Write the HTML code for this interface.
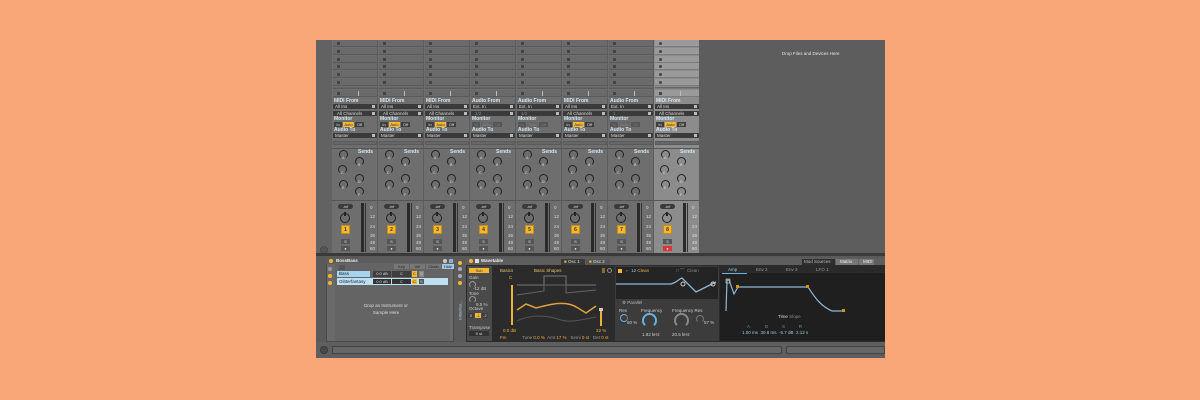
<!DOCTYPE html>
<html><head><meta charset="utf-8">
<style>
*{margin:0;padding:0;box-sizing:border-box}
body{width:1200px;height:400px;background:#f9a679;position:relative;overflow:hidden;font-family:"Liberation Sans",sans-serif;font-size:5px;color:#ddd}
#win{position:absolute;left:316px;top:40px;width:569px;height:318px;background:#5c5c5c;overflow:hidden}
.a{position:absolute}
.trk{position:absolute;top:0;width:45px;height:213px;background:#6e6e6e}
.trk.sel{background:#8c8c8c}
.clip{position:absolute;left:1px;width:44px;height:7px;background:#6a6a6a;border-bottom:1px solid #5a5a5a}
.sel .clip{background:#9a9a9a;border-bottom-color:#7a7a7a}
.sq{position:absolute;left:4px;top:2px;width:3px;height:3px;background:#444}
.lbl{position:absolute;left:2px;font-size:5px;font-weight:bold;color:#d6e6f0;line-height:6px}
.dd{position:absolute;left:1px;width:44px;height:5px;background:#3a3a3a;color:#ddd;font-size:4.5px;line-height:5px;padding-left:2px}
.dd:after{content:"";position:absolute;right:2px;top:1px;width:3px;height:3px;background:#bbb}
.btn{position:absolute;height:5px;font-size:4px;line-height:5px;text-align:center;background:#3e3e3e;color:#ddd}
.knob{position:absolute;width:9px;height:9px;border:1.3px solid #222;border-radius:50%;border-bottom-color:transparent}
.kl{position:absolute;font-size:3.5px;color:#ddd}
.num{position:absolute;left:9px;top:185px;width:9px;height:9px;background:#f5b730;color:#333;font-size:5px;font-weight:bold;text-align:center;line-height:9px;border:1px solid #c98e10}
.txt{position:absolute;font-size:4.5px;color:#ccc;white-space:nowrap}
.y{color:#f0b040}
</style></head><body>
<div id="win">
  <div class="a" style="left:0;top:0;width:16px;height:213px;background:#626262"></div>
  <div class="a" style="left:4px;top:206px;width:8px;height:8px;border-radius:50%;background:#555;border:1px solid #4a4a4a"></div>
  <div id="tracks"></div>
  <div class="a" style="left:385px;top:0;width:184px;height:213px;background:#5d5d5d"></div>
  <div class="txt" style="left:466px;top:11px;font-size:4.5px;color:#e6e6e6">Drop Files and Devices Here</div>
  <div class="a" style="left:0;top:213px;width:569px;height:3px;background:#3a3a3a"></div>
  <div class="a" style="left:0;top:216px;width:569px;height:102px;background:#5a5a5a"></div>

  <div class="a" style="left:10px;top:218px;width:128px;height:84px;background:#6a6a6a;border:1px solid #4a4a4a"></div>
  <div class="a" style="left:10px;top:218px;width:128px;height:6px;background:#5c5c5c"></div>
  <div class="a" style="left:13px;top:219px;width:4px;height:4px;border-radius:50%;background:#f5b730"></div>
  <div class="txt" style="left:20px;top:218px;color:#eee;font-weight:bold">BossBass</div>
  <div class="a" style="left:127px;top:219px;width:4px;height:4px;border-radius:50%;background:#ccc"></div>
  <div class="a" style="left:133px;top:219px;width:4px;height:4px;background:#9ac"></div>
  <div class="a" style="left:12px;top:227px;width:4px;height:4px;border-radius:50%;background:#999"></div>
  <div class="a" style="left:12px;top:234px;width:4px;height:4px;border-radius:50%;background:#f5b730"></div>
  <div class="a" style="left:12px;top:241px;width:4px;height:4px;border-radius:50%;background:#f5b730"></div>
  <div class="a" style="left:19px;top:223px;width:115px;height:78px;background:#646464"></div>
  <div class="btn" style="left:23px;top:225px;width:6px;background:#555"></div>
  <div class="btn" style="left:78px;top:224px;width:15px;background:#777;color:#222">Key</div>
  <div class="btn" style="left:94px;top:224px;width:15px;background:#777;color:#222">Vel</div>
  <div class="btn" style="left:110px;top:224px;width:15px;background:#777;color:#222">Chain</div>
  <div class="btn" style="left:126px;top:224px;width:12px;background:#9ccbe8;color:#222">Hide</div>
  <div class="a" style="left:21px;top:231px;width:33px;height:6px;background:#a4d4f0;color:#123;font-size:4.5px;padding-left:2px;line-height:6px">Bass</div>
  <div class="btn" style="left:57px;top:231px;width:18px;height:6px">0.0 dB</div>
  <div class="btn" style="left:76px;top:231px;width:19px;height:6px">C</div>
  <div class="btn" style="left:96px;top:231px;width:5px;height:6px;background:#f5b730;color:#333">C</div>
  <div class="btn" style="left:103px;top:231px;width:5px;height:6px;background:#888">S</div>
  <div class="a" style="left:21px;top:238px;width:111px;height:7px;background:#bfe0f2"></div>
  <div class="a" style="left:22px;top:239px;width:33px;height:5px;color:#123;font-size:4.5px;padding-left:1px;line-height:5px">Glitterfantasy</div>
  <div class="btn" style="left:57px;top:239px;width:18px;background:#333">0.0 dB</div>
  <div class="btn" style="left:76px;top:239px;width:19px;background:#333">C</div>
  <div class="btn" style="left:96px;top:239px;width:5px;background:#f5b730;color:#333">C</div>
  <div class="btn" style="left:103px;top:239px;width:5px;background:#555">S</div>
  <div class="txt" style="left:40px;top:262px;color:#ddd;text-align:center;width:60px;white-space:normal;line-height:7px">Drop an Instrument or Sample Here</div>

  <div class="a" style="left:140px;top:218px;width:9px;height:84px;background:#5a5a5a"></div>
  <div class="a" style="left:142px;top:221px;width:4px;height:4px;border-radius:50%;background:#f5b730"></div>
  <div class="a" style="left:142px;top:227px;width:4px;height:4px;border-radius:50%;background:#aaa"></div>
  <div class="a" style="left:142px;top:234px;width:4px;height:4px;border-radius:50%;background:#aaa"></div>
  <div class="a" style="left:142px;top:241px;width:4px;height:4px;border-radius:50%;background:#f5b730"></div>
  <div class="txt" style="left:134px;top:268px;transform:rotate(-90deg);font-size:4px;color:#bcd">Glitterfan...</div>

  <div class="a" style="left:150px;top:218px;width:419px;height:84px;background:#2b2b2b"></div>
  <div class="a" style="left:150px;top:218px;width:419px;height:7px;background:#5e5e5e"></div>
  <div class="a" style="left:153px;top:219px;width:4px;height:4px;border-radius:50%;background:#f5b730"></div>
  <div class="a" style="left:159px;top:219px;width:4px;height:4px;background:#ddd"></div>
  <div class="txt" style="left:165px;top:218px;color:#eee;font-weight:bold">Wavetable</div>
  <div class="a" style="left:245px;top:219px;width:24px;height:6px;background:#3a3a3a"></div>
  <div class="txt" style="left:248px;top:219px;color:#ddd"><span class="y">■</span> Osc 1</div>
  <div class="a" style="left:270px;top:219px;width:24px;height:6px;background:#555"></div>
  <div class="txt" style="left:273px;top:219px;color:#ddd"><span class="y">■</span> Osc 2</div>
  <div class="a" style="left:486px;top:219px;width:33px;height:6px;background:#2e2e2e"></div>
  <div class="txt" style="left:488px;top:219px;color:#bbb">Mod Sources</div>
  <div class="a" style="left:520px;top:219px;width:22px;height:6px;background:#777"></div>
  <div class="txt" style="left:524px;top:219px;color:#eee">Matrix</div>
  <div class="a" style="left:543px;top:219px;width:15px;height:6px;background:#777"></div>
  <div class="txt" style="left:547px;top:219px;color:#eee">MIDI</div>

  <div class="a" style="left:151px;top:226px;width:25px;height:75px;background:#4a4a4a"></div>
  <div class="a" style="left:153px;top:228px;width:20px;height:5px;background:#f5b730;color:#333;font-size:4px;text-align:center;line-height:5px">Sub</div>
  <div class="txt" style="left:153px;top:235px">Gain</div>
  <div class="knob" style="left:153px;top:241px;width:7px;height:7px;border-color:#999;border-bottom-color:transparent"></div>
  <div class="txt" style="left:157px;top:246px">-12 dB</div>
  <div class="txt" style="left:153px;top:251px">Tone</div>
  <div class="knob" style="left:153px;top:256px;width:7px;height:7px;border-color:#999;border-bottom-color:transparent"></div>
  <div class="txt" style="left:160px;top:262px">9.5 %</div>
  <div class="txt" style="left:153px;top:266px">Octave</div>
  <div class="btn" style="left:152px;top:273px;width:6px">0</div>
  <div class="btn" style="left:159px;top:273px;width:6px;background:#f5b730;color:#333">-1</div>
  <div class="btn" style="left:166px;top:273px;width:6px">-2</div>
  <div class="txt" style="left:153px;top:285px">Transpose</div>
  <div class="btn" style="left:153px;top:291px;width:20px;background:#333">0 st</div>

  <div class="txt" style="left:184px;top:228px;color:#f0c070">Basics</div>
  <div class="txt" style="left:218px;top:228px;color:#f0c070">Basic Shapes</div>
  <div class="a" style="left:286px;top:228px;width:3px;height:5px;background:#8a6a30"></div>
  <div class="a" style="left:291px;top:228px;width:5px;height:5px;border-radius:50%;border:1px solid #888"></div>
  <div class="a" style="left:195px;top:245px;width:2px;height:40px;background:#f0b040"></div>
  <div class="txt" style="left:193px;top:235px;color:#f0b040">C</div>
  <div class="txt" style="left:187px;top:288px;color:#f0b040">0.0 dB</div>
  <div class="a" style="left:284px;top:268px;width:2px;height:18px;background:#f0b040"></div>
  <div class="a" style="left:283px;top:268px;width:4px;height:3px;background:#ccc"></div>
  <div class="txt" style="left:280px;top:288px;color:#f0b040">32 %</div>
  <svg class="a" style="left:200px;top:232px" width="82" height="52" viewBox="0 0 82 52">
    <path d="M1 13 L28 13 L28 4 L50 4 L50 13 L80 13" fill="none" stroke="#777" stroke-width="1"/>
    <path d="M1 23 L28 19 L28 13 L50 13 L50 21 L80 18" fill="none" stroke="#666" stroke-width="1"/>
    <path d="M1 38 L10 32 L20 36 C35 32 50 28 62 36 L70 41 L80 34" fill="none" stroke="#e0a040" stroke-width="1.5"/>
    <path d="M1 49 C15 42 30 43 45 48 C55 51 70 47 80 45" fill="none" stroke="#555" stroke-width="1"/>
  </svg>
  <div class="txt" style="left:184px;top:295px;color:#f0b040">Fm</div>
  <div class="txt" style="left:206px;top:295px;color:#999">Tune <span class="y">0.0 %</span>&nbsp; Amt <span class="y">17 %</span>&nbsp;&nbsp; Semi <span class="y">0 st</span>&nbsp;&nbsp; Det <span class="y">0 st</span></div>

  <div class="a" style="left:299px;top:226px;width:104px;height:75px;background:#3c3c3c"></div>
  <div class="a" style="left:300px;top:227px;width:102px;height:32px;background:#242424"></div>
  <div class="a" style="left:302px;top:229px;width:4px;height:4px;background:#f5b730"></div>
  <div class="txt" style="left:310px;top:228px;color:#f0b040">⌐ &nbsp;<span style="color:#9cf">12</span> Clean</div>
  <div class="txt" style="left:360px;top:228px;color:#888">□ ⌒ &nbsp;Clean</div>
  <svg class="a" style="left:300px;top:236px" width="103" height="24"><path d="M0 8 L55 8 C62 6 64 2 66 2 L80 16 L100 6" fill="none" stroke="#8fb8d8" stroke-width="1.3"/><circle cx="67" cy="8" r="2" fill="none" stroke="#ccc"/><circle cx="97" cy="8" r="2" fill="none" stroke="#ccc"/></svg>
  <div class="txt" style="left:306px;top:260px;color:#bbb">⚙ Parallel</div>
  <div class="txt" style="left:303px;top:268px">Res</div>
  <div class="knob" style="left:304px;top:274px;width:8px;height:8px;border-color:#6ab0e0;border-right-color:#777"></div>
  <div class="txt" style="left:311px;top:280px">60 %</div>
  <div class="txt" style="left:325px;top:268px">Frequency</div>
  <div class="knob" style="left:326px;top:273px;width:15px;height:15px;border-width:2px;border-color:#6ab0e0;border-bottom-color:transparent"></div>
  <div class="txt" style="left:326px;top:292px">1.82 kHz</div>
  <div class="txt" style="left:356px;top:268px">Frequency Res</div>
  <div class="knob" style="left:358px;top:273px;width:15px;height:15px;border-width:2px;border-color:#888;border-bottom-color:transparent"></div>
  <div class="txt" style="left:356px;top:292px">20.5 kHz</div>
  <div class="knob" style="left:380px;top:275px;width:8px;height:8px;border-color:#777;border-bottom-color:transparent"></div>
  <div class="txt" style="left:388px;top:280px">57 %</div>

  <div class="a" style="left:404px;top:226px;width:165px;height:75px;background:#1f1f1f"></div>
  <div class="a" style="left:404px;top:226px;width:165px;height:7px;background:#2a2a2a"></div>
  <div class="txt" style="left:412px;top:227px;color:#9cd">Amp</div>
  <div class="a" style="left:406px;top:233px;width:25px;height:1px;background:#6ab0e0"></div>
  <div class="txt" style="left:440px;top:227px;color:#999">Env 2</div>
  <div class="txt" style="left:470px;top:227px;color:#999">Env 3</div>
  <div class="txt" style="left:500px;top:227px;color:#999">LFO 1</div>
  <svg class="a" style="left:404px;top:234px" width="165" height="40"><path d="M6 37 L7 6 L9 6 L14 20 L18 13 L88 13 C94 22 100 32 112 37 L125 37" fill="none" stroke="#8fb8d8" stroke-width="1.2"/><rect x="6" y="5" width="4" height="4" fill="none" stroke="#ccc" stroke-width=".6"/><rect x="16" y="11" width="3" height="3" fill="#c90"/><rect x="86" y="11" width="3" height="3" fill="#c90"/><rect x="122" y="35" width="3" height="3" fill="#c90"/></svg>
  <div class="txt" style="left:462px;top:274px;color:#ddd">Time <span style="color:#888">Slope</span></div>
  <div class="txt" style="left:431px;top:284px;color:#888">A&nbsp;&nbsp;&nbsp;&nbsp;&nbsp;&nbsp;&nbsp;&nbsp;&nbsp;&nbsp;&nbsp;&nbsp;D&nbsp;&nbsp;&nbsp;&nbsp;&nbsp;&nbsp;&nbsp;&nbsp;&nbsp;&nbsp;&nbsp;S&nbsp;&nbsp;&nbsp;&nbsp;&nbsp;&nbsp;&nbsp;&nbsp;&nbsp;&nbsp;&nbsp;R</div>
  <div class="txt" style="left:426px;top:290px;color:#9cd">1.00 ms &nbsp;30.8 ms &nbsp;-5.7 dB &nbsp;2.12 s</div>

  <div class="a" style="left:0;top:302px;width:569px;height:16px;background:#5e5e5e"></div>
  <div class="a" style="left:4px;top:306px;width:8px;height:8px;border-radius:50%;background:#4a4a4a;border:1px solid #3a3a3a"></div>
  <div class="a" style="left:16px;top:306px;width:450px;height:8px;background:#666;border:1px solid #444"></div>
  <div class="a" style="left:470px;top:306px;width:99px;height:8px;background:#666;border:1px solid #444"></div>
</div>
<script>
var h='';
var from=['MIDI From','MIDI From','MIDI From','Audio From','Audio From','MIDI From','Audio From','MIDI From'];
var src=['All Ins','All Ins','All Ins','Ext. In','Ext. In','All Ins','Ext. In','All Ins'];
var ch=['All Channels','All Channels','All Channels','1/2','1/2','All Channels','1','All Channels'];
for(var i=0;i<8;i++){
 var x=16+i*46, s=i==7?' sel':'';
 h+='<div class="trk'+s+'" style="left:'+x+'px">';
 for(var r=0;r<6;r++){h+='<div class="clip" style="top:'+(r*7.8)+'px"><div class="sq"'+(i==7?' style="border-radius:50%"':'')+'></div></div>';}
 h+='<div class="clip" style="top:47px;height:2px;background:#666"></div>';
 h+='<div class="clip" style="top:50px;height:7px"><div class="sq"></div><div style="position:absolute;left:25px;top:1px;width:1px;height:5px;background:#bbb"></div></div>';
 h+='<div class="lbl" style="top:58px">'+from[i]+'</div>';
 h+='<div class="dd" style="top:64px">'+src[i]+'</div>';
 h+='<div class="dd" style="top:71px;padding-left:4px;'+(i==3||i==4||i==6?'color:#888':'')+'">'+ch[i]+'</div>';
 h+='<div class="lbl" style="top:76px">Monitor</div>';
 var dim=(i==3||i==4||i==6);
 h+='<div class="btn" style="left:2px;top:82px;width:8px;'+(dim?'color:#777;background:#555':'')+'">In</div>';
 h+='<div class="btn" style="left:11px;top:82px;width:11px;'+(dim?'color:#888;background:#666':'background:#f5b730;color:#333')+'">Auto</div>';
 h+='<div class="btn" style="left:23px;top:82px;width:9px;'+(dim?'color:#777;background:#555':'')+'">Off</div>';
 h+='<div class="lbl" style="top:87px">Audio To</div>';
 h+='<div class="dd" style="top:93px">Master</div>';
 h+='<div style="position:absolute;left:1px;top:101px;width:44px;height:4px;background:#666;border:1px solid #5a5a5a"></div>';
 h+='<div style="position:absolute;left:0;top:108px;width:45px;height:1px;background:#555"></div>';
 h+='<div class="lbl" style="top:109px;left:26px">Sends</div>';
 var kp=[[7,110,'A'],[23,117,'B'],[6,125,'C'],[23,134,'D'],[7,140,'E'],[23,147,'F']];
 for(var k=0;k<6;k++){h+='<div class="knob" style="left:'+kp[k][0]+'px;top:'+kp[k][1]+'px"></div><div class="kl" style="left:'+(kp[k][0]+3)+'px;top:'+(kp[k][1]+6)+'px">'+kp[k][2]+'</div>';}
 h+='<div style="position:absolute;left:0;top:160px;width:45px;height:1px;background:#555"></div>';
 h+='<div class="btn" style="left:6px;top:164px;width:15px;border-radius:3px;background:#3a3a3a;font-size:4px">-inf</div>';
 h+='<div class="knob" style="left:8px;top:173px;width:10px;height:10px;border-bottom-color:#222;border-top-color:#222"></div>';
 h+='<div style="position:absolute;left:12px;top:172px;width:1.5px;height:4px;background:#222"></div>';
 h+='<div class="num">'+(i+1)+'</div>';
 h+='<div class="btn" style="left:9px;top:199px;width:9px;background:#555">S</div>';
 h+='<div class="btn" style="left:9px;top:206px;width:9px;'+(i==7?'background:#d33':'background:#555')+'">●</div>';
 h+='<div style="position:absolute;left:29px;top:163px;width:3px;height:49px;background:#2a2a2a"></div>';
 h+='<div style="position:absolute;left:33px;top:163px;width:1px;height:49px;background:#333"></div>';
 var sc=[['0',165],['12',174],['24',184],['36',193],['48',200],['60',206]];
 for(var q=0;q<6;q++)h+='<div class="kl" style="left:38px;top:'+sc[q][1]+'px;font-size:4.5px">'+sc[q][0]+'</div>';
 h+='</div>';
}
document.getElementById('tracks').innerHTML=h;
</script>
</body></html>
